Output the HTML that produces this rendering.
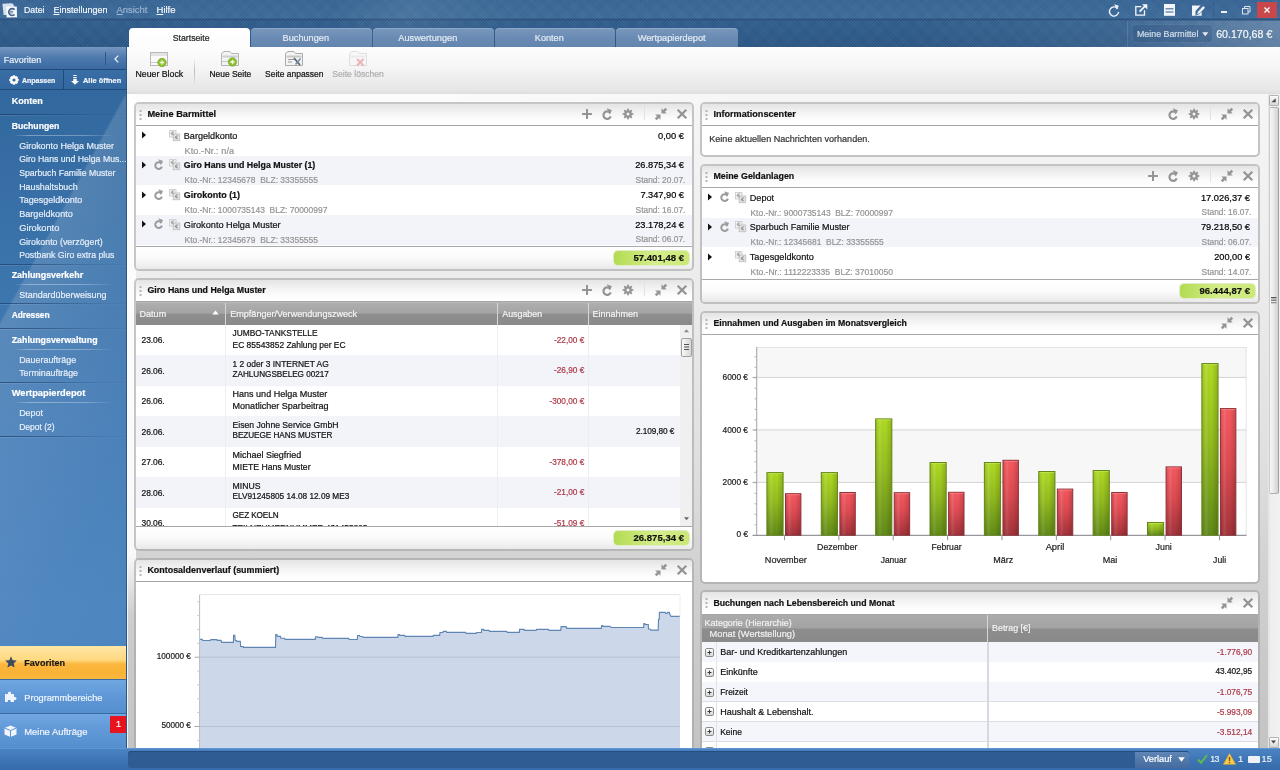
<!DOCTYPE html><html lang="de"><head><meta charset="utf-8"><title>Startseite</title><style>

html,body{margin:0;padding:0}
body{width:1280px;height:770px;overflow:hidden;position:relative;background:#ececec;font-family:"Liberation Sans", sans-serif;-webkit-font-smoothing:antialiased}
.t{position:absolute;white-space:nowrap;font-family:"Liberation Sans", sans-serif;-webkit-text-stroke:0.2px currentColor}
svg{overflow:visible}

</style></head><body><div id="app" style="position:absolute;left:0;top:0;width:1280px;height:770px;overflow:hidden;will-change:transform">
<div style="position:absolute;left:127px;top:94px;width:1153px;height:654px;background:linear-gradient(#f6f6f6 0,#f1f1f1 100px,#ebebeb 200px,#e0e0e0 360px,#d1d1d1 480px,#cacaca 560px,#c4c4c4 654px);overflow:hidden"><div style="position:absolute;left:0;top:0;width:9px;height:520px;background:linear-gradient(rgba(255,255,255,.85) 0,rgba(255,255,255,.85) 460px,rgba(255,255,255,0))"></div><div style="position:absolute;left:0;top:0;width:640px;height:200px;background:linear-gradient(163deg,rgba(255,255,255,.75) 0,rgba(255,255,255,.55) 25%,rgba(255,255,255,0) 50%)"></div><div style="position:absolute;left:0;top:0;width:1px;height:654px;background:rgba(255,255,255,.8)"></div></div>
<div style="position:absolute;left:0px;top:0px;width:1280px;height:47px;background:linear-gradient(#366596 0,#3b6a9a 18px,#28507d 19px,#28507d 20px,#2f5d8e 21px,#2b5888 40px,#2a5686 47px)"></div>
<div style="position:absolute;left:0px;top:0px;width:1280px;height:47px;background:repeating-linear-gradient(45deg,rgba(255,255,255,.03) 0 1px,rgba(0,0,0,.02) 1px 2px),repeating-linear-gradient(135deg,rgba(255,255,255,.025) 0 1px,rgba(0,0,0,.02) 1px 2px)"></div>
<div style="position:absolute;left:180px;top:0px;width:500px;height:47px;background:linear-gradient(115deg,rgba(255,255,255,0) 30%,rgba(255,255,255,.07) 45%,rgba(255,255,255,.02) 60%,rgba(255,255,255,0) 75%)"></div>
<div style="position:absolute;left:900px;top:20px;width:380px;height:27px;background:linear-gradient(90deg,rgba(255,255,255,0),rgba(255,255,255,.10))"></div>
<svg style="position:absolute;left:2px;top:2.5px" width="16" height="15" viewBox="0 0 16 15"><path d="M0.400 0.800L10.200 0.300 11.800 2v9.500L1.600 12z" fill="#d6e0ec"/><path d="M4.200 3.600L14.800 3.400 15 14.300 4.600 14.400z" fill="#f5f8fc"/><path d="M12.600 6.700a3.400 3.400 0 1 0 0 4.800" stroke="#47648a" stroke-width="1.700" fill="none"/><path d="M7.800 8.300h3.400M7.800 9.900h3.400" stroke="#5a7699" stroke-width=".9"/></svg>
<div class="t" style="top:4.0px;font-size:8.78px;line-height:12px;color:#f4f7fb;left:24px;text-decoration-thickness:1px;text-decoration-color:rgba(255,255,255,.4);">Datei</div>
<div class="t" style="top:4.0px;font-size:8.99px;line-height:12px;color:#f4f7fb;left:53.5px;text-decoration-thickness:1px;text-decoration-color:rgba(255,255,255,.4);"><u>E</u>instellungen</div>
<div class="t" style="top:4.0px;font-size:9.45px;line-height:12px;color:#9db4d1;left:116.5px;text-decoration-thickness:1px;text-decoration-color:rgba(255,255,255,.4);"><u>A</u>nsicht</div>
<div class="t" style="top:4.0px;font-size:9.5px;line-height:12px;color:#f4f7fb;left:156.5px;text-decoration-thickness:1px;text-decoration-color:rgba(255,255,255,.4);"><u>H</u>ilfe</div>
<svg style="position:absolute;left:1107.5px;top:3.5px" width="12" height="12.5" viewBox="0 0 12 12.5"><path d="M9.6 4.6A4.6 4.6 0 1 0 10.6 8" stroke="#f2f5fa" stroke-width="1.4" fill="none"/><path d="M6.2 0.2L10.8 1.8L8.8 5.6Z" fill="#f2f5fa"/></svg>
<svg style="position:absolute;left:1135px;top:4px" width="12.5" height="12" viewBox="0 0 12.5 12"><path d="M6.4 2.6H0.8v8.600h8.700V6.2" stroke="#f2f5fa" stroke-width="1.3" fill="none"/><path d="M4.6 7.6L10 2.200" stroke="#f2f5fa" stroke-width="1.9"/><path d="M7 0.2h5.300v5.300z" fill="#f2f5fa"/></svg>
<svg style="position:absolute;left:1164px;top:4px" width="11" height="12" viewBox="0 0 11 12"><rect x="0" y="0" width="11" height="11.8" fill="#f2f5fa"/><path d="M1.5 4.700h8M1.5 8h8" stroke="#6f8fb6" stroke-width="1.5"/></svg>
<svg style="position:absolute;left:1191.5px;top:4px" width="14" height="12" viewBox="0 0 14 12"><path d="M0 1.500h8.500l-5 5.500v4.800H0z" fill="#f2f5fa"/><path d="M3.500 11.800h6.200V6.500z" fill="#f2f5fa"/><path d="M4.700 10.800l.9-3 5.600-6 2.100 1.900-5.600 6z" fill="#f2f5fa" stroke="#3a6898" stroke-width=".7"/></svg>
<div style="position:absolute;left:1213px;top:2px;width:1px;height:16px;background:rgba(0,0,0,.10)"></div>
<div style="position:absolute;left:1221px;top:11px;width:6px;height:2px;background:#eef2f8"></div>
<svg style="position:absolute;left:1241.5px;top:6px" width="9" height="8.5" viewBox="0 0 9 8.5"><rect x="0.5" y="2.500" width="5.500" height="5.500" fill="none" stroke="#dbe4ef" stroke-width="1"/><path d="M2.500 2.500V0.500h5.500v5.500H6" fill="none" stroke="#dbe4ef" stroke-width="1"/></svg>
<div style="position:absolute;left:1257px;top:1.5px;width:20px;height:16.5px;background:#c8474a"></div>
<svg style="position:absolute;left:1264px;top:7px" width="6" height="6" viewBox="0 0 6 6"><path d="M0.500 0.500l5 5M5.500 0.500l-5 5" stroke="#fff" stroke-width="1.300" fill="none"/></svg>
<div style="position:absolute;left:1128px;top:20.5px;width:152px;height:26.5px;background:linear-gradient(90deg,rgba(255,255,255,.02),rgba(255,255,255,.09) 50%,rgba(255,255,255,.17))"></div>
<div style="position:absolute;left:1127px;top:21px;width:1px;height:26px;background:rgba(255,255,255,.12)"></div>
<div style="position:absolute;left:1133px;top:25px;width:79px;height:17px;background:rgba(30,65,110,.2);border-radius:3px;box-shadow:0 0 0 1px rgba(255,255,255,.03)"></div>
<div class="t" style="top:28.0px;font-size:8.85px;line-height:12px;color:#d3deeb;left:1137px;">Meine Barmittel</div>
<svg style="position:absolute;left:1201.5px;top:32px" width="6.5" height="4.5" viewBox="0 0 6.5 4.5"><path d="M0.200 0.300h6.100L3.250 4.200z" fill="#e6edf6"/></svg>
<div class="t" style="top:27.7px;font-size:10.64px;line-height:12px;color:#f4f7fb;right:7.70px;text-align:right;">60.170,68 €</div>
<div style="position:absolute;left:129px;top:28px;width:121px;height:20px;background:linear-gradient(#fff,#fcfcfc);border-radius:4px 4px 0 0"></div>
<div class="t" style="top:31.5px;font-size:8.71px;line-height:12px;color:#222;left:41.20px;width:300px;text-align:center;">Startseite</div>
<div style="position:absolute;left:251px;top:28px;width:121px;height:18.5px;background:linear-gradient(#7a98bc,#6b8cb4 45%,#6285ae);border-radius:4px 4px 0 0;box-shadow:inset 0 1px 0 rgba(255,255,255,.15)"></div>
<div class="t" style="top:31.5px;font-size:9.19px;line-height:12px;color:#e4ebf4;left:155.80px;width:300px;text-align:center;">Buchungen</div>
<div style="position:absolute;left:373px;top:28px;width:121px;height:18.5px;background:linear-gradient(#7a98bc,#6b8cb4 45%,#6285ae);border-radius:4px 4px 0 0;box-shadow:inset 0 1px 0 rgba(255,255,255,.15)"></div>
<div class="t" style="top:31.5px;font-size:9.23px;line-height:12px;color:#e4ebf4;left:277.80px;width:300px;text-align:center;">Auswertungen</div>
<div style="position:absolute;left:495px;top:28px;width:120px;height:18.5px;background:linear-gradient(#7a98bc,#6b8cb4 45%,#6285ae);border-radius:4px 4px 0 0;box-shadow:inset 0 1px 0 rgba(255,255,255,.15)"></div>
<div class="t" style="top:31.5px;font-size:9.15px;line-height:12px;color:#e4ebf4;left:399.30px;width:300px;text-align:center;">Konten</div>
<div style="position:absolute;left:616px;top:28px;width:122px;height:18.5px;background:linear-gradient(#7a98bc,#6b8cb4 45%,#6285ae);border-radius:4px 4px 0 0;box-shadow:inset 0 1px 0 rgba(255,255,255,.15)"></div>
<div class="t" style="top:31.5px;font-size:9.22px;line-height:12px;color:#e4ebf4;left:521.70px;width:300px;text-align:center;">Wertpapierdepot</div>
<div style="position:absolute;left:127px;top:47px;width:1153px;height:47px;background:linear-gradient(#fdfdfd,#f6f6f6 40%,#e6e6e6 92%,#dedede)"></div>
<div style="position:absolute;left:194px;top:58px;width:1px;height:28px;background:linear-gradient(rgba(200,200,200,0),#c2c2c2 40%,#c2c2c2 60%,rgba(200,200,200,0))"></div>
<svg style="position:absolute;left:150px;top:51px" width="20" height="17" viewBox="0 0 20 17"><rect x="0.5" y="1.5" width="17" height="13" fill="#fafafa" stroke="#b9b9b9"/><rect x="1" y="2" width="16" height="3" fill="#e3e3e3"/><path d="M1 11.5h16" stroke="#c9c9c9"/><circle cx="12" cy="11.5" r="4.2" fill="#8bbf2c" stroke="#6f9e1e" stroke-width=".6"/><path d="M9.7 11.5h4.6M12 9.2v4.6" stroke="#f2f9df" stroke-width="1.3"/></svg>
<svg style="position:absolute;left:221px;top:50px" width="20" height="18" viewBox="0 0 20 18"><path d="M0.5 3.5v12h17v-12h-7l-1.5-2h-6z" fill="#f3f3f3" stroke="#b5b5b5"/><path d="M1.5 6.5h15" stroke="#cfcfcf" stroke-width="2"/><path d="M1 11.5h9" stroke="#c9c9c9"/><circle cx="11.5" cy="12" r="4.2" fill="#8bbf2c" stroke="#6f9e1e" stroke-width=".6"/><path d="M9.2 12h4.6M11.5 9.7v4.6" stroke="#f2f9df" stroke-width="1.3"/></svg>
<svg style="position:absolute;left:285px;top:50px" width="20" height="18" viewBox="0 0 20 18"><path d="M0.5 3.5v12h17v-12h-7l-1.5-2h-6z" fill="#f3f3f3" stroke="#ababab"/><path d="M1.5 6.5h15" stroke="#c7c7c7" stroke-width="2"/><path d="M3 9.5h6M3 12h4" stroke="#9a9a9a"/><path d="M9 8l6 7" stroke="#55657a" stroke-width="1.8"/><path d="M15.5 8.5l-5 6" stroke="#7a8aa0" stroke-width="1.5"/></svg>
<svg style="position:absolute;left:349px;top:50px" width="20" height="18" viewBox="0 0 20 18"><g opacity=".5"><path d="M0.5 3.5v12h17v-12h-7l-1.5-2h-6z" fill="#f6f6f6" stroke="#c4c4c4"/><path d="M1.5 6.5h15" stroke="#dcdcdc" stroke-width="2"/><path d="M8 9l6.5 6.5M14.5 9L8 15.500" stroke="#e0707a" stroke-width="2"/></g></svg>
<div class="t" style="top:68.0px;font-size:8.78px;line-height:12px;color:#111;left:9.30px;width:300px;text-align:center;">Neuer Block</div>
<div class="t" style="top:68.0px;font-size:8.45px;line-height:12px;color:#111;left:80.30px;width:300px;text-align:center;">Neue Seite</div>
<div class="t" style="top:68.0px;font-size:8.47px;line-height:12px;color:#111;left:144.30px;width:300px;text-align:center;">Seite anpassen</div>
<div class="t" style="top:68.0px;font-size:8.59px;line-height:12px;color:#adadad;left:208.10px;width:300px;text-align:center;">Seite löschen</div>
<div style="position:absolute;left:0px;top:47px;width:126px;height:701px;background:linear-gradient(#30669c 0,#32699f 60px,#3a72aa 200px,#457db7 380px,#4b84bf 560px);overflow:hidden"><div style="position:absolute;left:0;top:43px;width:126px;height:658px;background:linear-gradient(118.8deg,rgba(255,255,255,0) 26%,rgba(255,255,255,.14) 26.6%,rgba(255,255,255,.09) 40%,rgba(255,255,255,.03) 65%,rgba(255,255,255,0) 100%)"></div></div>
<div style="position:absolute;left:126px;top:47px;width:1px;height:701px;background:#2a5689"></div>
<div style="position:absolute;left:0px;top:47px;width:126px;height:22px;background:linear-gradient(#7597c0,#4d79ad 50%,#3b6aa1)"></div>
<div class="t" style="top:53.5px;font-size:9.02px;line-height:12px;color:#e9eff7;left:3.8px;">Favoriten</div>
<div style="position:absolute;left:105px;top:52px;width:1px;height:13px;background:#2f5788"></div>
<svg style="position:absolute;left:114px;top:55px" width="5" height="8" viewBox="0 0 5 8"><path d="M4.2 0.6L1 4l3.200 3.400" stroke="#e8eef6" stroke-width="1.3" fill="none"/></svg>
<div style="position:absolute;left:0px;top:69px;width:126px;height:1px;background:#204a7a"></div>
<div style="position:absolute;left:0px;top:70px;width:126px;height:19px;background:linear-gradient(#386da6,#33679f)"></div>
<div style="position:absolute;left:63px;top:70px;width:1px;height:19px;background:#204a7a"></div>
<div style="position:absolute;left:0px;top:89px;width:126px;height:1px;background:#204a7a"></div>
<svg style="position:absolute;left:9px;top:74.5px" width="10" height="10" viewBox="0 0 10 10"><rect x="3.900" y="0.300" width="2.200" height="9.400" transform="rotate(0 5 5)" fill="#fff"/><rect x="3.900" y="0.300" width="2.200" height="9.400" transform="rotate(45 5 5)" fill="#fff"/><rect x="3.900" y="0.300" width="2.200" height="9.400" transform="rotate(90 5 5)" fill="#fff"/><rect x="3.900" y="0.300" width="2.200" height="9.400" transform="rotate(135 5 5)" fill="#fff"/><circle cx="5" cy="5" r="3.900" fill="#fff"/><circle cx="5" cy="5" r="1.600" fill="#34679d"/></svg>
<div class="t" style="top:74.5px;font-size:6.97px;line-height:12px;color:#eef3f9;font-weight:700;left:22px;">Anpassen</div>
<svg style="position:absolute;left:71px;top:74.5px" width="8" height="10" viewBox="0 0 8 10"><path d="M2.300 0.500h3.400M2.300 2.500h3.400" stroke="#fff" stroke-width="1"/><path d="M2.300 3.800h3.400v2.200h2.300L4 9.800 0 6h2.300z" fill="#fff"/></svg>
<div class="t" style="top:74.5px;font-size:7.41px;line-height:12px;color:#eef3f9;font-weight:700;left:83px;">Alle öffnen</div>
<div class="t" style="top:94.5px;font-size:9.0px;line-height:12px;color:#fff;font-weight:700;left:11.7px;">Konten</div>
<div style="position:absolute;left:0px;top:114px;width:126px;height:1px;background:linear-gradient(90deg,rgba(20,55,100,.65),rgba(20,55,100,.45) 40%,rgba(20,55,100,.12) 80%,rgba(20,55,100,.05))"></div><div style="position:absolute;left:0px;top:115px;width:126px;height:1px;background:linear-gradient(90deg,rgba(255,255,255,.10),rgba(255,255,255,.02) 70%)"></div>
<div class="t" style="top:119.7px;font-size:8.69px;line-height:12px;color:#fff;font-weight:700;left:11.7px;">Buchungen</div>
<div style="position:absolute;left:14px;top:135px;width:100px;height:1px;background:linear-gradient(90deg,rgba(255,255,255,.0),rgba(255,255,255,.35) 15%,rgba(255,255,255,.3) 70%,rgba(255,255,255,0))"></div>
<div class="t" style="top:139.6px;font-size:8.98px;line-height:12px;color:#e6eef8;left:19.2px;">Girokonto Helga Muster</div>
<div class="t" style="top:153.3px;font-size:8.71px;line-height:12px;color:#e6eef8;left:19.2px;">Giro Hans und Helga Mus...</div>
<div class="t" style="top:167.0px;font-size:8.66px;line-height:12px;color:#e6eef8;left:19.2px;">Sparbuch Familie Muster</div>
<div class="t" style="top:180.7px;font-size:8.83px;line-height:12px;color:#e6eef8;left:19.2px;">Haushaltsbuch</div>
<div class="t" style="top:194.4px;font-size:8.99px;line-height:12px;color:#e6eef8;left:19.2px;">Tagesgeldkonto</div>
<div class="t" style="top:208.1px;font-size:9.11px;line-height:12px;color:#e6eef8;left:19.2px;">Bargeldkonto</div>
<div class="t" style="top:221.8px;font-size:9.25px;line-height:12px;color:#e6eef8;left:19.2px;">Girokonto</div>
<div class="t" style="top:235.5px;font-size:8.85px;line-height:12px;color:#e6eef8;left:19.2px;">Girokonto (verzögert)</div>
<div class="t" style="top:249.2px;font-size:8.7px;line-height:12px;color:#e6eef8;left:19.2px;">Postbank Giro extra plus</div>
<div style="position:absolute;left:0px;top:264px;width:126px;height:1px;background:linear-gradient(90deg,rgba(20,55,100,.65),rgba(20,55,100,.45) 40%,rgba(20,55,100,.12) 80%,rgba(20,55,100,.05))"></div><div style="position:absolute;left:0px;top:265px;width:126px;height:1px;background:linear-gradient(90deg,rgba(255,255,255,.10),rgba(255,255,255,.02) 70%)"></div>
<div class="t" style="top:269.0px;font-size:8.87px;line-height:12px;color:#fff;font-weight:700;left:11.7px;">Zahlungsverkehr</div>
<div style="position:absolute;left:14px;top:284px;width:100px;height:1px;background:linear-gradient(90deg,rgba(255,255,255,.0),rgba(255,255,255,.35) 15%,rgba(255,255,255,.3) 70%,rgba(255,255,255,0))"></div>
<div class="t" style="top:289.0px;font-size:8.97px;line-height:12px;color:#e6eef8;left:19.2px;">Standardüberweisung</div>
<div style="position:absolute;left:0px;top:303px;width:126px;height:1px;background:linear-gradient(90deg,rgba(20,55,100,.65),rgba(20,55,100,.45) 40%,rgba(20,55,100,.12) 80%,rgba(20,55,100,.05))"></div><div style="position:absolute;left:0px;top:304px;width:126px;height:1px;background:linear-gradient(90deg,rgba(255,255,255,.10),rgba(255,255,255,.02) 70%)"></div>
<div class="t" style="top:308.8px;font-size:8.46px;line-height:12px;color:#fff;font-weight:700;letter-spacing:-0.095px;left:11.7px;">Adressen</div>
<div style="position:absolute;left:0px;top:328px;width:126px;height:1px;background:linear-gradient(90deg,rgba(20,55,100,.65),rgba(20,55,100,.45) 40%,rgba(20,55,100,.12) 80%,rgba(20,55,100,.05))"></div><div style="position:absolute;left:0px;top:329px;width:126px;height:1px;background:linear-gradient(90deg,rgba(255,255,255,.10),rgba(255,255,255,.02) 70%)"></div>
<div class="t" style="top:333.8px;font-size:8.84px;line-height:12px;color:#fff;font-weight:700;left:11.7px;">Zahlungsverwaltung</div>
<div style="position:absolute;left:14px;top:349px;width:100px;height:1px;background:linear-gradient(90deg,rgba(255,255,255,.0),rgba(255,255,255,.35) 15%,rgba(255,255,255,.3) 70%,rgba(255,255,255,0))"></div>
<div class="t" style="top:353.7px;font-size:8.92px;line-height:12px;color:#e6eef8;left:19.2px;">Daueraufträge</div>
<div class="t" style="top:367.4px;font-size:8.82px;line-height:12px;color:#e6eef8;left:19.2px;">Terminaufträge</div>
<div style="position:absolute;left:0px;top:382px;width:126px;height:1px;background:linear-gradient(90deg,rgba(20,55,100,.65),rgba(20,55,100,.45) 40%,rgba(20,55,100,.12) 80%,rgba(20,55,100,.05))"></div><div style="position:absolute;left:0px;top:383px;width:126px;height:1px;background:linear-gradient(90deg,rgba(255,255,255,.10),rgba(255,255,255,.02) 70%)"></div>
<div class="t" style="top:387.0px;font-size:9.31px;line-height:12px;color:#fff;font-weight:700;left:11.7px;">Wertpapierdepot</div>
<div style="position:absolute;left:14px;top:402px;width:100px;height:1px;background:linear-gradient(90deg,rgba(255,255,255,.0),rgba(255,255,255,.35) 15%,rgba(255,255,255,.3) 70%,rgba(255,255,255,0))"></div>
<div class="t" style="top:407.0px;font-size:8.92px;line-height:12px;color:#e6eef8;left:19.2px;">Depot</div>
<div class="t" style="top:421.0px;font-size:8.52px;line-height:12px;color:#e6eef8;left:19.2px;">Depot (2)</div>
<div style="position:absolute;left:0px;top:436px;width:126px;height:1px;background:linear-gradient(90deg,rgba(20,55,100,.65),rgba(20,55,100,.45) 40%,rgba(20,55,100,.12) 80%,rgba(20,55,100,.05))"></div><div style="position:absolute;left:0px;top:437px;width:126px;height:1px;background:linear-gradient(90deg,rgba(255,255,255,.10),rgba(255,255,255,.02) 70%)"></div>
<div style="position:absolute;left:0px;top:646px;width:126px;height:33px;background:linear-gradient(#ffe7a6,#fed980 42%,#fbb73e 55%,#f9b235 80%,#fab840)"></div>
<svg style="position:absolute;left:5px;top:656px" width="12" height="12" viewBox="0 0 12 12"><path d="M6 0.3l1.7 3.900 4.100.4-3.100 2.800.9 4.200L6 9.400 2.400 11.600l.9-4.200L.2 4.600l4.100-.4z" fill="#3c4d60"/></svg>
<div class="t" style="top:657.0px;font-size:9.06px;line-height:12px;color:#1a1a1a;font-weight:700;left:24.3px;">Favoriten</div>
<div style="position:absolute;left:0px;top:679px;width:126px;height:1px;background:#3a6aa0"></div>
<div style="position:absolute;left:0px;top:680px;width:126px;height:33px;background:linear-gradient(#70a7e2,#6199d8 45%,#568fce)"></div>
<svg style="position:absolute;left:4px;top:690px" width="13" height="13" viewBox="0 0 13 13"><path d="M1 5h3.200a1.600 1.600 0 1 1 2.600 0H10v3.200a1.600 1.600 0 1 1 0 2.600V13H6.500a1.500 1.500 0 1 0-2.600 0H1z" fill="#eef4fb" transform="translate(0,-1)"/></svg>
<div class="t" style="top:691.5px;font-size:9.2px;line-height:12px;color:#eef4fb;left:24.3px;">Programmbereiche</div>
<div style="position:absolute;left:0px;top:713px;width:126px;height:1px;background:#3a6aa0"></div>
<div style="position:absolute;left:0px;top:714px;width:126px;height:34px;background:linear-gradient(#70a7e2,#6199d8 45%,#568fce)"></div>
<svg style="position:absolute;left:4px;top:725px" width="13" height="12" viewBox="0 0 13 12"><path d="M6.500 0.500L12.500 3v6.500L6.500 12 0.500 9.500V3z" fill="#f2f6fb"/><path d="M0.500 3l6 2.500 6-2.500M6.500 5.500V12" stroke="#5b92cf" stroke-width="1" fill="none"/></svg>
<div class="t" style="top:725.5px;font-size:9.4px;line-height:12px;color:#eef4fb;left:24.3px;">Meine Aufträge</div>
<div style="position:absolute;left:110px;top:716px;width:16px;height:16.5px;background:#e8131d"></div>
<div class="t" style="top:718.0px;font-size:9px;line-height:12px;color:#fff;left:-31.50px;width:300px;text-align:center;">1</div>
<div style="position:absolute;left:1268px;top:94px;width:12px;height:654px;background:linear-gradient(90deg,#e3e3e3,#efefef 25%,#f1f1f1)"></div>
<div style="position:absolute;left:1268.5px;top:94.5px;width:10.5px;height:11.5px;background:linear-gradient(#fbfbfb,#e6e6e6 60%,#d6d6d6);border:1px solid #b3b3b3;box-sizing:border-box;border-radius:1px"></div>
<svg style="position:absolute;left:1271px;top:98px" width="5" height="4.5" viewBox="0 0 5 4.5"><path d="M0.300 4.200H4.700V0.300z" fill="#4a4a4a"/></svg>
<div style="position:absolute;left:1268.5px;top:107px;width:10.5px;height:387px;background:linear-gradient(90deg,#f6f6f6,#ededed 35%,#dcdcdc 75%,#d2d2d2);border:1px solid #b0b0b0;border-left-color:#cdcdcd;border-right-color:#a2a2a2;box-sizing:border-box;border-radius:2px"></div>
<svg style="position:absolute;left:1270.8px;top:297.3px" width="5.5" height="7" viewBox="0 0 5.5 7"><path d="M0 0.700h5.500" stroke="#4a4a4a" stroke-width="1.200"/><path d="M0 3.200h5.500" stroke="#6a6a6a" stroke-width="1.200"/><path d="M0 5.700h5.500" stroke="#8a8a8a" stroke-width="1.200"/></svg>
<div style="position:absolute;left:1268.5px;top:737px;width:10.5px;height:10.5px;background:linear-gradient(#fbfbfb,#e6e6e6 60%,#d6d6d6);border:1px solid #b3b3b3;box-sizing:border-box;border-radius:1px"></div>
<svg style="position:absolute;left:1271.3px;top:740.3px" width="5" height="4" viewBox="0 0 5 4"><path d="M0 0.500h5L2.500 3.500z" fill="#444"/></svg>
<div style="position:absolute;left:134px;top:102px;width:560px;height:169px;border:2px solid rgba(163,163,163,.6);border-radius:5px;background:#fff;background-clip:padding-box;box-sizing:border-box;overflow:hidden"><div style="position:absolute;left:0px;top:0px;width:556px;height:21px;background:linear-gradient(#e4e4e4,#f1f1f1 35%,#fcfcfc 70%,#fff);border-bottom:1px solid #a6a6a6"></div></div><svg style="position:absolute;left:139px;top:110px" width="3" height="10" viewBox="0 0 3 10"><rect x="0.5" y="0" width="2" height="2" fill="#b5b5b5"/><rect x="0.5" y="4" width="2" height="2" fill="#b5b5b5"/><rect x="0.5" y="8" width="2" height="2" fill="#b5b5b5"/></svg><div class="t" style="top:108.0px;font-size:9.24px;line-height:12px;color:#111;font-weight:700;left:147.4px;">Meine Barmittel</div><svg style="position:absolute;left:676.3px;top:108.3px" width="12" height="12" viewBox="0 0 12 12"><path d="M1.700 1.700l8.600 8.600M10.300 1.700l-8.600 8.600" stroke="#949494" stroke-width="2.300" fill="none"/></svg><svg style="position:absolute;left:654.8px;top:108.0px" width="12" height="12" viewBox="0 0 12 12"><path d="M6.500 0.300V5.500H11.700Z" fill="#949494"/><path d="M8.400 3.600L11.300 0.700" stroke="#949494" stroke-width="2.500"/><path d="M0.300 6.500H5.500V11.700Z" fill="#949494"/><path d="M3.600 8.400L0.700 11.300" stroke="#949494" stroke-width="2.500"/></svg><div style="position:absolute;left:644px;top:105px;width:1px;height:15px;background:#e2e2e2"></div><svg style="position:absolute;left:621.6px;top:108.0px" width="12" height="12" viewBox="0 0 12 12"><rect x="5.100" y="0.700" width="1.800" height="10.600" transform="rotate(0 6 6)" fill="#949494"/><rect x="5.100" y="0.700" width="1.800" height="10.600" transform="rotate(45 6 6)" fill="#949494"/><rect x="5.100" y="0.700" width="1.800" height="10.600" transform="rotate(90 6 6)" fill="#949494"/><rect x="5.100" y="0.700" width="1.800" height="10.600" transform="rotate(135 6 6)" fill="#949494"/><circle cx="6" cy="6" r="3.800" fill="#949494"/><circle cx="6" cy="6" r="1.500" fill="#f6f6f6"/></svg><svg style="position:absolute;left:601.0px;top:108.0px" width="12" height="12" viewBox="0 0 12 12"><path d="M9.300 5.200A3.700 3.700 0 1 0 9.700 8.300" stroke="#949494" stroke-width="2.200" fill="none"/><path d="M5.800 0.300L11 2.300L8.600 6.600Z" fill="#949494"/></svg><svg style="position:absolute;left:581px;top:108.0px" width="12" height="12" viewBox="0 0 12 12"><path d="M6 1.1v9.8M1.1 6h9.8" stroke="#949494" stroke-width="2" fill="none"/></svg><div style="position:absolute;left:136px;top:246px;width:556px;height:23px;background:linear-gradient(#fff,#fbfbfb 50%,#e9e9e9);border-top:1px solid #a8a8a8;border-radius:0 0 3px 3px;box-sizing:border-box"></div><div style="position:absolute;left:613.5px;top:251.2px;width:75px;height:13.8px;background:linear-gradient(90deg,#b3db52,#d6ee8d 55%,#cbe877);border-radius:4px;box-shadow:0 0 0 1px #e3ecca"></div><div class="t" style="top:252.3px;font-size:9.54px;line-height:12px;color:#111;font-weight:700;letter-spacing:0.018px;right:595.98px;text-align:right;">57.401,48 €</div>
<svg style="position:absolute;left:140.7px;top:131.2px" width="6" height="8" viewBox="0 0 6 8"><path d="M1 0.500L5 4L1 7.500Z" fill="#111"/></svg><svg style="position:absolute;left:169.3px;top:129.7px" width="11.2" height="11.2" viewBox="0 0 12 12"><rect x="0.500" y="0.500" width="7" height="7" fill="#f1f1f1" stroke="#cfcfcf"/><rect x="4.500" y="4.300" width="7" height="7.200" fill="#e6e6e6" stroke="#c2c2c2"/><path d="M5.600 2.300a1.700 1.700 0 1 0 0 2.600M2 3.200h2.500M2 4.200h2.500" stroke="#9a9a9a" stroke-width=".9" fill="none"/><path d="M9.800 6.500a1.700 1.700 0 1 0 0 2.800M6.300 7.500h2.500M6.300 8.500h2.500" stroke="#8a8a8a" stroke-width=".9" fill="none"/></svg><div class="t" style="top:129.6px;font-size:9.1px;line-height:12px;color:#111;left:183.8px;">Bargeldkonto</div><div class="t" style="top:144.6px;font-size:9.12px;line-height:12px;color:#949494;letter-spacing:0.082px;left:184.5px;white-space:pre;">Kto.-Nr.: n/a</div><div class="t" style="top:129.5px;font-size:9.32px;line-height:12px;color:#000;right:596.00px;text-align:right;">0,00 €</div><div style="position:absolute;left:136px;top:155.7px;width:556px;height:29.7px;background:#f2f4fa"></div><svg style="position:absolute;left:140.7px;top:160.89999999999998px" width="6" height="8" viewBox="0 0 6 8"><path d="M1 0.500L5 4L1 7.500Z" fill="#111"/></svg><svg style="position:absolute;left:153.2px;top:159.0px" width="11" height="11" viewBox="0 0 12 12"><path d="M9.300 5.200A3.700 3.700 0 1 0 9.700 8.300" stroke="#9c9c9c" stroke-width="2.200" fill="none"/><path d="M5.800 0.300L11 2.300L8.600 6.600Z" fill="#9c9c9c"/></svg><svg style="position:absolute;left:169.3px;top:159.39999999999998px" width="11.2" height="11.2" viewBox="0 0 12 12"><rect x="0.500" y="0.500" width="7" height="7" fill="#f1f1f1" stroke="#cfcfcf"/><rect x="4.500" y="4.300" width="7" height="7.200" fill="#e6e6e6" stroke="#c2c2c2"/><path d="M5.600 2.300a1.700 1.700 0 1 0 0 2.600M2 3.200h2.500M2 4.200h2.500" stroke="#9a9a9a" stroke-width=".9" fill="none"/><path d="M9.800 6.500a1.700 1.700 0 1 0 0 2.800M6.300 7.500h2.500M6.300 8.500h2.500" stroke="#8a8a8a" stroke-width=".9" fill="none"/></svg><div class="t" style="top:159.3px;font-size:8.81px;line-height:12px;color:#111;font-weight:700;left:183.8px;">Giro Hans und Helga Muster (1)</div><div class="t" style="top:174.3px;font-size:8.46px;line-height:12px;color:#949494;left:184.5px;white-space:pre;">Kto.-Nr.: 12345678  BLZ: 33355555</div><div class="t" style="top:159.2px;font-size:9.24px;line-height:12px;color:#000;right:596.00px;text-align:right;">26.875,34 €</div><div class="t" style="top:173.9px;font-size:8.4px;line-height:12px;color:#949494;right:594.60px;text-align:right;">Stand: 20.07.</div><svg style="position:absolute;left:140.7px;top:190.6px" width="6" height="8" viewBox="0 0 6 8"><path d="M1 0.500L5 4L1 7.500Z" fill="#111"/></svg><svg style="position:absolute;left:153.2px;top:188.70000000000002px" width="11" height="11" viewBox="0 0 12 12"><path d="M9.300 5.200A3.700 3.700 0 1 0 9.700 8.300" stroke="#9c9c9c" stroke-width="2.200" fill="none"/><path d="M5.800 0.300L11 2.300L8.600 6.600Z" fill="#9c9c9c"/></svg><svg style="position:absolute;left:169.3px;top:189.1px" width="11.2" height="11.2" viewBox="0 0 12 12"><rect x="0.500" y="0.500" width="7" height="7" fill="#f1f1f1" stroke="#cfcfcf"/><rect x="4.500" y="4.300" width="7" height="7.200" fill="#e6e6e6" stroke="#c2c2c2"/><path d="M5.600 2.300a1.700 1.700 0 1 0 0 2.600M2 3.200h2.500M2 4.200h2.500" stroke="#9a9a9a" stroke-width=".9" fill="none"/><path d="M9.800 6.500a1.700 1.700 0 1 0 0 2.800M6.300 7.500h2.500M6.300 8.500h2.500" stroke="#8a8a8a" stroke-width=".9" fill="none"/></svg><div class="t" style="top:189.0px;font-size:8.98px;line-height:12px;color:#111;font-weight:700;left:183.8px;">Girokonto (1)</div><div class="t" style="top:204.0px;font-size:8.46px;line-height:12px;color:#949494;left:184.5px;white-space:pre;">Kto.-Nr.: 1000735143  BLZ: 70000997</div><div class="t" style="top:188.9px;font-size:9.22px;line-height:12px;color:#000;right:596.00px;text-align:right;">7.347,90 €</div><div class="t" style="top:203.6px;font-size:8.4px;line-height:12px;color:#949494;right:594.60px;text-align:right;">Stand: 16.07.</div><div style="position:absolute;left:136px;top:215.1px;width:556px;height:29.7px;background:#f2f4fa"></div><svg style="position:absolute;left:140.7px;top:220.29999999999998px" width="6" height="8" viewBox="0 0 6 8"><path d="M1 0.500L5 4L1 7.500Z" fill="#111"/></svg><svg style="position:absolute;left:153.2px;top:218.4px" width="11" height="11" viewBox="0 0 12 12"><path d="M9.300 5.200A3.700 3.700 0 1 0 9.700 8.300" stroke="#9c9c9c" stroke-width="2.200" fill="none"/><path d="M5.800 0.300L11 2.300L8.600 6.600Z" fill="#9c9c9c"/></svg><svg style="position:absolute;left:169.3px;top:218.79999999999998px" width="11.2" height="11.2" viewBox="0 0 12 12"><rect x="0.500" y="0.500" width="7" height="7" fill="#f1f1f1" stroke="#cfcfcf"/><rect x="4.500" y="4.300" width="7" height="7.200" fill="#e6e6e6" stroke="#c2c2c2"/><path d="M5.600 2.300a1.700 1.700 0 1 0 0 2.600M2 3.200h2.500M2 4.200h2.500" stroke="#9a9a9a" stroke-width=".9" fill="none"/><path d="M9.800 6.500a1.700 1.700 0 1 0 0 2.800M6.300 7.500h2.500M6.300 8.500h2.500" stroke="#8a8a8a" stroke-width=".9" fill="none"/></svg><div class="t" style="top:218.7px;font-size:9.19px;line-height:12px;color:#111;left:183.8px;">Girokonto Helga Muster</div><div class="t" style="top:233.7px;font-size:8.46px;line-height:12px;color:#949494;left:184.5px;white-space:pre;">Kto.-Nr.: 12345679  BLZ: 33355555</div><div class="t" style="top:218.6px;font-size:9.26px;line-height:12px;color:#000;right:596.00px;text-align:right;">23.178,24 €</div><div class="t" style="top:233.3px;font-size:8.4px;line-height:12px;color:#949494;right:594.60px;text-align:right;">Stand: 06.07.</div>
<div style="position:absolute;left:134px;top:278px;width:560px;height:273px;border:2px solid rgba(163,163,163,.6);border-radius:5px;background:#fff;background-clip:padding-box;box-sizing:border-box;overflow:hidden"><div style="position:absolute;left:0px;top:0px;width:556px;height:21px;background:linear-gradient(#e4e4e4,#f1f1f1 35%,#fcfcfc 70%,#fff);border-bottom:1px solid #a6a6a6"></div></div><svg style="position:absolute;left:139px;top:286px" width="3" height="10" viewBox="0 0 3 10"><rect x="0.5" y="0" width="2" height="2" fill="#b5b5b5"/><rect x="0.5" y="4" width="2" height="2" fill="#b5b5b5"/><rect x="0.5" y="8" width="2" height="2" fill="#b5b5b5"/></svg><div class="t" style="top:284.0px;font-size:8.81px;line-height:12px;color:#111;font-weight:700;left:147.4px;">Giro Hans und Helga Muster</div><svg style="position:absolute;left:676.3px;top:284.3px" width="12" height="12" viewBox="0 0 12 12"><path d="M1.700 1.700l8.600 8.600M10.300 1.700l-8.600 8.600" stroke="#949494" stroke-width="2.300" fill="none"/></svg><svg style="position:absolute;left:654.8px;top:284.0px" width="12" height="12" viewBox="0 0 12 12"><path d="M6.500 0.300V5.500H11.700Z" fill="#949494"/><path d="M8.400 3.600L11.300 0.700" stroke="#949494" stroke-width="2.500"/><path d="M0.300 6.500H5.500V11.700Z" fill="#949494"/><path d="M3.600 8.400L0.700 11.300" stroke="#949494" stroke-width="2.500"/></svg><div style="position:absolute;left:644px;top:281px;width:1px;height:15px;background:#e2e2e2"></div><svg style="position:absolute;left:621.6px;top:284.0px" width="12" height="12" viewBox="0 0 12 12"><rect x="5.100" y="0.700" width="1.800" height="10.600" transform="rotate(0 6 6)" fill="#949494"/><rect x="5.100" y="0.700" width="1.800" height="10.600" transform="rotate(45 6 6)" fill="#949494"/><rect x="5.100" y="0.700" width="1.800" height="10.600" transform="rotate(90 6 6)" fill="#949494"/><rect x="5.100" y="0.700" width="1.800" height="10.600" transform="rotate(135 6 6)" fill="#949494"/><circle cx="6" cy="6" r="3.800" fill="#949494"/><circle cx="6" cy="6" r="1.500" fill="#f6f6f6"/></svg><svg style="position:absolute;left:601.0px;top:284.0px" width="12" height="12" viewBox="0 0 12 12"><path d="M9.300 5.200A3.700 3.700 0 1 0 9.700 8.300" stroke="#949494" stroke-width="2.200" fill="none"/><path d="M5.800 0.300L11 2.300L8.600 6.600Z" fill="#949494"/></svg><svg style="position:absolute;left:581px;top:284.0px" width="12" height="12" viewBox="0 0 12 12"><path d="M6 1.1v9.8M1.1 6h9.8" stroke="#949494" stroke-width="2" fill="none"/></svg><div style="position:absolute;left:136px;top:526px;width:556px;height:23px;background:linear-gradient(#fff,#fbfbfb 50%,#e9e9e9);border-top:1px solid #a8a8a8;border-radius:0 0 3px 3px;box-sizing:border-box"></div><div style="position:absolute;left:613.5px;top:531.2px;width:75px;height:13.8px;background:linear-gradient(90deg,#b3db52,#d6ee8d 55%,#cbe877);border-radius:4px;box-shadow:0 0 0 1px #e3ecca"></div><div class="t" style="top:532.3px;font-size:9.54px;line-height:12px;color:#111;font-weight:700;letter-spacing:0.018px;right:595.98px;text-align:right;">26.875,34 €</div>
<div style="position:absolute;left:136px;top:302px;width:556px;height:23px;background:linear-gradient(#b9b9b9 0,#adadad 2px,#a4a4a4 48%,#8e8e8e 54%,#8a8a8a)"></div>
<div style="position:absolute;left:225px;top:302.5px;width:1px;height:22.5px;background:#d6d6d6"></div>
<div style="position:absolute;left:496.5px;top:302.5px;width:1px;height:22.5px;background:#d6d6d6"></div>
<div style="position:absolute;left:588px;top:302.5px;width:1px;height:22.5px;background:#d6d6d6"></div>
<div class="t" style="top:308.0px;font-size:9.03px;line-height:12px;color:#f4f4f4;left:139.6px;">Datum</div>
<div class="t" style="top:308.0px;font-size:9.07px;line-height:12px;color:#f4f4f4;left:230.2px;">Empfänger/Verwendungszweck</div>
<div class="t" style="top:308.0px;font-size:8.86px;line-height:12px;color:#f4f4f4;left:502.3px;">Ausgaben</div>
<div class="t" style="top:308.0px;font-size:8.99px;line-height:12px;color:#f4f4f4;left:592.5px;">Einnahmen</div>
<svg style="position:absolute;left:212px;top:310.3px" width="7" height="5" viewBox="0 0 7 5"><path d="M0.300 4.600h6.400L3.500 0.400z" fill="#fff"/></svg>
<div style="position:absolute;left:0;top:0;width:1280px;height:526px;overflow:hidden"><div style="position:absolute;left:136px;top:355.0px;width:545px;height:30.5px;background:#f2f4fa"></div><div style="position:absolute;left:136px;top:416.0px;width:545px;height:30.5px;background:#f2f4fa"></div><div style="position:absolute;left:136px;top:477.0px;width:545px;height:30.5px;background:#f2f4fa"></div><div style="position:absolute;left:225px;top:325px;width:1px;height:201px;background:#eceef2"></div><div style="position:absolute;left:496.5px;top:325px;width:1px;height:201px;background:#eceef2"></div><div style="position:absolute;left:588px;top:325px;width:1px;height:201px;background:#eceef2"></div><div class="t" style="top:334.0px;font-size:8.46px;line-height:12px;color:#111;letter-spacing:-0.087px;left:141.6px;">23.06.</div><div class="t" style="top:327.1px;font-size:8.39px;line-height:12px;color:#111;left:232.5px;">JUMBO-TANKSTELLE</div><div class="t" style="top:338.9px;font-size:8.45px;line-height:12px;color:#111;left:232.5px;">EC 85543852 Zahlung per EC</div><div class="t" style="top:334.5px;font-size:8.28px;line-height:12px;color:#ad3a46;right:695.70px;text-align:right;">-22,00 €</div><div class="t" style="top:364.5px;font-size:8.46px;line-height:12px;color:#111;letter-spacing:-0.087px;left:141.6px;">26.06.</div><div class="t" style="top:357.6px;font-size:8.44px;line-height:12px;color:#111;left:232.5px;">1 2 oder 3 INTERNET AG</div><div class="t" style="top:369.4px;font-size:8.19px;line-height:12px;color:#111;letter-spacing:-0.024px;left:232.5px;">ZAHLUNGSBELEG 00217</div><div class="t" style="top:365.0px;font-size:8.28px;line-height:12px;color:#ad3a46;right:695.70px;text-align:right;">-26,90 €</div><div class="t" style="top:395.0px;font-size:8.46px;line-height:12px;color:#111;letter-spacing:-0.087px;left:141.6px;">26.06.</div><div class="t" style="top:388.1px;font-size:9.04px;line-height:12px;color:#111;left:232.5px;">Hans und Helga Muster</div><div class="t" style="top:399.9px;font-size:9.05px;line-height:12px;color:#111;left:232.5px;">Monatlicher Sparbeitrag</div><div class="t" style="top:395.5px;font-size:8.27px;line-height:12px;color:#ad3a46;letter-spacing:-0.006px;right:695.71px;text-align:right;">-300,00 €</div><div class="t" style="top:425.5px;font-size:8.46px;line-height:12px;color:#111;letter-spacing:-0.087px;left:141.6px;">26.06.</div><div class="t" style="top:418.6px;font-size:8.63px;line-height:12px;color:#111;left:232.5px;">Eisen Johne Service GmbH</div><div class="t" style="top:430.4px;font-size:8.19px;line-height:12px;color:#111;letter-spacing:-0.054px;left:232.5px;">BEZUEGE HANS MUSTER</div><div class="t" style="top:426.0px;font-size:8.27px;line-height:12px;color:#111;letter-spacing:-0.08px;right:605.68px;text-align:right;">2.109,80 €</div><div class="t" style="top:456.0px;font-size:8.46px;line-height:12px;color:#111;letter-spacing:-0.087px;left:141.6px;">27.06.</div><div class="t" style="top:449.1px;font-size:8.98px;line-height:12px;color:#111;left:232.5px;">Michael Siegfried</div><div class="t" style="top:460.9px;font-size:8.69px;line-height:12px;color:#111;left:232.5px;">MIETE Hans Muster</div><div class="t" style="top:456.5px;font-size:8.27px;line-height:12px;color:#ad3a46;letter-spacing:-0.006px;right:695.71px;text-align:right;">-378,00 €</div><div class="t" style="top:486.5px;font-size:8.46px;line-height:12px;color:#111;letter-spacing:-0.087px;left:141.6px;">28.06.</div><div class="t" style="top:479.6px;font-size:8.69px;line-height:12px;color:#111;left:232.5px;">MINUS</div><div class="t" style="top:491.4px;font-size:8.26px;line-height:12px;color:#111;left:232.5px;">ELV91245805 14.08 12.09 ME3</div><div class="t" style="top:487.0px;font-size:8.28px;line-height:12px;color:#ad3a46;right:695.70px;text-align:right;">-21,00 €</div><div class="t" style="top:517.0px;font-size:8.46px;line-height:12px;color:#111;letter-spacing:-0.087px;left:141.6px;">30.06.</div><div class="t" style="top:510.1px;font-size:8.19px;line-height:12px;color:#111;letter-spacing:-0.086px;left:232.5px;">GEZ KOELN</div><div class="t" style="top:521.9px;font-size:8.32px;line-height:12px;color:#111;left:232.5px;">TEILNEHMERNUMMER 431455895</div><div class="t" style="top:517.5px;font-size:8.28px;line-height:12px;color:#ad3a46;right:695.70px;text-align:right;">-51,09 €</div></div>
<div style="position:absolute;left:679.5px;top:325px;width:12.5px;height:201px;background:#f0f0f0"></div>
<svg style="position:absolute;left:683.5px;top:328.5px" width="5" height="3.5" viewBox="0 0 5 3.5"><path d="M0 3.300h5L2.500 0.300z" fill="#8a8a8a"/></svg>
<div style="position:absolute;left:680.5px;top:337.5px;width:11px;height:19px;background:linear-gradient(90deg,#fafafa,#e3e3e3 60%,#d8d8d8);border:1px solid #9f9f9f;box-sizing:border-box;border-radius:2px"></div>
<svg style="position:absolute;left:683.5px;top:343.5px" width="5" height="7" viewBox="0 0 5 7"><path d="M0 0.500h5M0 3h5M0 5.500h5" stroke="#555" stroke-width="1"/></svg>
<svg style="position:absolute;left:683.5px;top:516.5px" width="5" height="3.5" viewBox="0 0 5 3.5"><path d="M0 0.300h5L2.500 3.300z" fill="#666"/></svg>
<div style="position:absolute;left:134px;top:558px;width:560px;height:220px;border:2px solid rgba(163,163,163,.6);border-radius:5px;background:#fff;background-clip:padding-box;box-sizing:border-box;overflow:hidden"><div style="position:absolute;left:0px;top:0px;width:556px;height:21px;background:linear-gradient(#e4e4e4,#f1f1f1 35%,#fcfcfc 70%,#fff);border-bottom:1px solid #a6a6a6"></div></div><svg style="position:absolute;left:139px;top:566px" width="3" height="10" viewBox="0 0 3 10"><rect x="0.5" y="0" width="2" height="2" fill="#b5b5b5"/><rect x="0.5" y="4" width="2" height="2" fill="#b5b5b5"/><rect x="0.5" y="8" width="2" height="2" fill="#b5b5b5"/></svg><div class="t" style="top:564.0px;font-size:8.94px;line-height:12px;color:#111;font-weight:700;left:147.4px;">Kontosaldenverlauf (summiert)</div><svg style="position:absolute;left:676.3px;top:564.3px" width="12" height="12" viewBox="0 0 12 12"><path d="M1.700 1.700l8.600 8.600M10.300 1.700l-8.600 8.600" stroke="#949494" stroke-width="2.300" fill="none"/></svg><svg style="position:absolute;left:654.8px;top:564.0px" width="12" height="12" viewBox="0 0 12 12"><path d="M6.500 0.300V5.500H11.700Z" fill="#949494"/><path d="M8.400 3.600L11.300 0.700" stroke="#949494" stroke-width="2.500"/><path d="M0.300 6.500H5.500V11.700Z" fill="#949494"/><path d="M3.600 8.400L0.700 11.300" stroke="#949494" stroke-width="2.500"/></svg>
<div style="position:absolute;left:136px;top:582px;width:556px;height:166px;background:#fff;overflow:hidden"><svg style="position:absolute;left:63px;top:12px" width="481" height="160" viewBox="0 0 481 160"><rect x="0.600" y="0.600" width="480.400" height="160" fill="#fff"/><polygon points="0.600,160 0.6,45.3 3.2,45.3 3.7,46.5 11.4,46.5 11.8,45.6 17.9,45.6 18.2,46.4 22.0,46.4 22.7,48.4 34.4,48.4 34.6,41.2 35.8,41.2 36.2,46.3 37.6,46.6 37.8,47.3 41.3,47.3 41.6,52.4 44.2,52.6 44.4,53.4 76.5,53.4 76.8,40.5 77.9,40.5 78.3,42.4 81.4,42.4 81.9,44.2 85.5,44.2 86.0,45.4 116.3,45.4 116.6,42.7 118.5,42.7 119.0,43.4 123.2,43.4 123.7,44.4 149.6,44.4 150.1,45.5 158.3,45.5 158.6,41.5 160.5,41.5 161.0,42.5 163.3,42.5 164.3,43.3 198.8,43.3 199.1,40.5 200.4,40.5 200.8,41.4 205.5,41.4 206.0,42.3 233.9,42.3 234.4,41.3 240.7,41.3 241.0,38.5 244.0,38.5 244.3,37.4 247.3,37.4 247.8,38.4 266.5,38.4 267.0,39.4 277.2,39.4 277.7,38.5 282.4,38.5 282.7,35.4 284.6,35.4 285.0,36.3 290.0,36.3 290.5,37.3 307.7,37.3 308.2,38.4 320.3,38.4 320.6,35.3 325.0,35.3 325.5,36.3 337.1,36.3 337.6,35.3 349.3,35.3 349.8,36.3 361.8,36.3 362.1,32.6 367.2,32.6 367.7,34.4 402.4,34.4 402.7,31.5 403.7,31.5 404.0,32.4 410.8,32.4 412.4,33.5 444.6,33.5 444.9,29.5 445.9,29.5 446.2,30.5 449.2,30.5 449.6,35.1 451.5,35.3 452.0,36.1 459.2,36.1 459.5,25.5 460.2,25.5 460.4,18.3 466.2,18.3 466.7,19.4 468.2,19.4 468.7,18.3 470.3,18.3 470.8,20.4 471.5,21.6 472.0,22.4 481.0,22.4 481,160" fill="#ccd8ea"/><path d="M0.600 63.200h480.400M0.600 132.500h480.400" stroke="#b5c2d6" stroke-width="1"/><polyline points="0.6,45.3 3.2,45.3 3.7,46.5 11.4,46.5 11.8,45.6 17.9,45.6 18.2,46.4 22.0,46.4 22.7,48.4 34.4,48.4 34.6,41.2 35.8,41.2 36.2,46.3 37.6,46.6 37.8,47.3 41.3,47.3 41.6,52.4 44.2,52.6 44.4,53.4 76.5,53.4 76.8,40.5 77.9,40.5 78.3,42.4 81.4,42.4 81.9,44.2 85.5,44.2 86.0,45.4 116.3,45.4 116.6,42.7 118.5,42.7 119.0,43.4 123.2,43.4 123.7,44.4 149.6,44.4 150.1,45.5 158.3,45.5 158.6,41.5 160.5,41.5 161.0,42.5 163.3,42.5 164.3,43.3 198.8,43.3 199.1,40.5 200.4,40.5 200.8,41.4 205.5,41.4 206.0,42.3 233.9,42.3 234.4,41.3 240.7,41.3 241.0,38.5 244.0,38.5 244.3,37.4 247.3,37.4 247.8,38.4 266.5,38.4 267.0,39.4 277.2,39.4 277.7,38.5 282.4,38.5 282.7,35.4 284.6,35.4 285.0,36.3 290.0,36.3 290.5,37.3 307.7,37.3 308.2,38.4 320.3,38.4 320.6,35.3 325.0,35.3 325.5,36.3 337.1,36.3 337.6,35.3 349.3,35.3 349.8,36.3 361.8,36.3 362.1,32.6 367.2,32.6 367.7,34.4 402.4,34.4 402.7,31.5 403.7,31.5 404.0,32.4 410.8,32.4 412.4,33.5 444.6,33.5 444.9,29.5 445.9,29.5 446.2,30.5 449.2,30.5 449.6,35.1 451.5,35.3 452.0,36.1 459.2,36.1 459.5,25.5 460.2,25.5 460.4,18.3 466.2,18.3 466.7,19.4 468.2,19.4 468.7,18.3 470.3,18.3 470.8,20.4 471.5,21.6 472.0,22.4 481.0,22.4" fill="none" stroke="#5f85b3" stroke-width="1.150" stroke-linejoin="miter"/><path d="M0.600 0.600v160" stroke="#b9bcc2" stroke-width="1"/><path d="M0.600 0.600h480.400" stroke="#e4e4e4"/><path d="M481 0.600v22" stroke="#ededed"/><path d="M-1.800 160.2h2.400" stroke="#c9c9c9" stroke-width="1"/><path d="M-1.800 146.4h2.400" stroke="#c9c9c9" stroke-width="1"/><path d="M-1.800 132.5h2.400" stroke="#c9c9c9" stroke-width="1"/><path d="M-1.800 118.6h2.400" stroke="#c9c9c9" stroke-width="1"/><path d="M-1.800 104.8h2.400" stroke="#c9c9c9" stroke-width="1"/><path d="M-1.800 90.9h2.400" stroke="#c9c9c9" stroke-width="1"/><path d="M-1.800 77.1h2.400" stroke="#c9c9c9" stroke-width="1"/><path d="M-1.800 49.3h2.400" stroke="#c9c9c9" stroke-width="1"/><path d="M-1.800 35.5h2.400" stroke="#c9c9c9" stroke-width="1"/><path d="M-1.800 21.6h2.400" stroke="#c9c9c9" stroke-width="1"/><path d="M-1.800 7.8h2.400" stroke="#c9c9c9" stroke-width="1"/><path d="M-4.500 63.200h5M-4.500 132.500h5" stroke="#a9a9a9" stroke-width="1"/></svg></div>
<div class="t" style="top:651.0px;font-size:8.18px;line-height:12px;color:#222;letter-spacing:-0.014px;right:1089.21px;text-align:right;">100000 €</div>
<div class="t" style="top:720.3px;font-size:8.18px;line-height:12px;color:#222;letter-spacing:-0.037px;right:1089.24px;text-align:right;">50000 €</div>
<div style="position:absolute;left:700px;top:102px;width:560px;height:55px;border:2px solid rgba(163,163,163,.6);border-radius:5px;background:#fff;background-clip:padding-box;box-sizing:border-box;overflow:hidden"><div style="position:absolute;left:0px;top:0px;width:556px;height:21px;background:linear-gradient(#e4e4e4,#f1f1f1 35%,#fcfcfc 70%,#fff);border-bottom:1px solid #a6a6a6"></div></div><svg style="position:absolute;left:705px;top:110px" width="3" height="10" viewBox="0 0 3 10"><rect x="0.5" y="0" width="2" height="2" fill="#b5b5b5"/><rect x="0.5" y="4" width="2" height="2" fill="#b5b5b5"/><rect x="0.5" y="8" width="2" height="2" fill="#b5b5b5"/></svg><div class="t" style="top:108.0px;font-size:9.11px;line-height:12px;color:#111;font-weight:700;left:713.4px;">Informationscenter</div><svg style="position:absolute;left:1242.3px;top:108.3px" width="12" height="12" viewBox="0 0 12 12"><path d="M1.700 1.700l8.600 8.600M10.300 1.700l-8.600 8.600" stroke="#949494" stroke-width="2.300" fill="none"/></svg><svg style="position:absolute;left:1220.8px;top:108.0px" width="12" height="12" viewBox="0 0 12 12"><path d="M6.500 0.300V5.500H11.700Z" fill="#949494"/><path d="M8.400 3.600L11.300 0.700" stroke="#949494" stroke-width="2.500"/><path d="M0.300 6.500H5.500V11.700Z" fill="#949494"/><path d="M3.600 8.400L0.700 11.300" stroke="#949494" stroke-width="2.500"/></svg><div style="position:absolute;left:1210px;top:105px;width:1px;height:15px;background:#e2e2e2"></div><svg style="position:absolute;left:1187.6px;top:108.0px" width="12" height="12" viewBox="0 0 12 12"><rect x="5.100" y="0.700" width="1.800" height="10.600" transform="rotate(0 6 6)" fill="#949494"/><rect x="5.100" y="0.700" width="1.800" height="10.600" transform="rotate(45 6 6)" fill="#949494"/><rect x="5.100" y="0.700" width="1.800" height="10.600" transform="rotate(90 6 6)" fill="#949494"/><rect x="5.100" y="0.700" width="1.800" height="10.600" transform="rotate(135 6 6)" fill="#949494"/><circle cx="6" cy="6" r="3.800" fill="#949494"/><circle cx="6" cy="6" r="1.500" fill="#f6f6f6"/></svg><svg style="position:absolute;left:1167.0px;top:108.0px" width="12" height="12" viewBox="0 0 12 12"><path d="M9.300 5.200A3.700 3.700 0 1 0 9.700 8.300" stroke="#949494" stroke-width="2.200" fill="none"/><path d="M5.800 0.300L11 2.300L8.600 6.600Z" fill="#949494"/></svg>
<div class="t" style="top:133.3px;font-size:9.05px;line-height:12px;color:#333;left:709.3px;">Keine aktuellen Nachrichten vorhanden.</div>
<div style="position:absolute;left:700px;top:164px;width:560px;height:140px;border:2px solid rgba(163,163,163,.6);border-radius:5px;background:#fff;background-clip:padding-box;box-sizing:border-box;overflow:hidden"><div style="position:absolute;left:0px;top:0px;width:556px;height:21px;background:linear-gradient(#e4e4e4,#f1f1f1 35%,#fcfcfc 70%,#fff);border-bottom:1px solid #a6a6a6"></div></div><svg style="position:absolute;left:705px;top:172px" width="3" height="10" viewBox="0 0 3 10"><rect x="0.5" y="0" width="2" height="2" fill="#b5b5b5"/><rect x="0.5" y="4" width="2" height="2" fill="#b5b5b5"/><rect x="0.5" y="8" width="2" height="2" fill="#b5b5b5"/></svg><div class="t" style="top:170.0px;font-size:8.89px;line-height:12px;color:#111;font-weight:700;left:713.4px;">Meine Geldanlagen</div><svg style="position:absolute;left:1242.3px;top:170.3px" width="12" height="12" viewBox="0 0 12 12"><path d="M1.700 1.700l8.600 8.600M10.300 1.700l-8.600 8.600" stroke="#949494" stroke-width="2.300" fill="none"/></svg><svg style="position:absolute;left:1220.8px;top:170.0px" width="12" height="12" viewBox="0 0 12 12"><path d="M6.500 0.300V5.500H11.700Z" fill="#949494"/><path d="M8.400 3.600L11.300 0.700" stroke="#949494" stroke-width="2.500"/><path d="M0.300 6.500H5.500V11.700Z" fill="#949494"/><path d="M3.600 8.400L0.700 11.300" stroke="#949494" stroke-width="2.500"/></svg><div style="position:absolute;left:1210px;top:167px;width:1px;height:15px;background:#e2e2e2"></div><svg style="position:absolute;left:1187.6px;top:170.0px" width="12" height="12" viewBox="0 0 12 12"><rect x="5.100" y="0.700" width="1.800" height="10.600" transform="rotate(0 6 6)" fill="#949494"/><rect x="5.100" y="0.700" width="1.800" height="10.600" transform="rotate(45 6 6)" fill="#949494"/><rect x="5.100" y="0.700" width="1.800" height="10.600" transform="rotate(90 6 6)" fill="#949494"/><rect x="5.100" y="0.700" width="1.800" height="10.600" transform="rotate(135 6 6)" fill="#949494"/><circle cx="6" cy="6" r="3.800" fill="#949494"/><circle cx="6" cy="6" r="1.500" fill="#f6f6f6"/></svg><svg style="position:absolute;left:1167.0px;top:170.0px" width="12" height="12" viewBox="0 0 12 12"><path d="M9.300 5.200A3.700 3.700 0 1 0 9.700 8.300" stroke="#949494" stroke-width="2.200" fill="none"/><path d="M5.800 0.300L11 2.300L8.600 6.600Z" fill="#949494"/></svg><svg style="position:absolute;left:1147px;top:170.0px" width="12" height="12" viewBox="0 0 12 12"><path d="M6 1.1v9.8M1.1 6h9.8" stroke="#949494" stroke-width="2" fill="none"/></svg><div style="position:absolute;left:702px;top:279px;width:556px;height:23px;background:linear-gradient(#fff,#fbfbfb 50%,#e9e9e9);border-top:1px solid #a8a8a8;border-radius:0 0 3px 3px;box-sizing:border-box"></div><div style="position:absolute;left:1179.5px;top:284.2px;width:75px;height:13.8px;background:linear-gradient(90deg,#b3db52,#d6ee8d 55%,#cbe877);border-radius:4px;box-shadow:0 0 0 1px #e3ecca"></div><div class="t" style="top:285.3px;font-size:9.54px;line-height:12px;color:#111;font-weight:700;letter-spacing:0.018px;right:29.98px;text-align:right;">96.444,87 €</div>
<svg style="position:absolute;left:706.7px;top:193.2px" width="6" height="8" viewBox="0 0 6 8"><path d="M1 0.500L5 4L1 7.500Z" fill="#111"/></svg><svg style="position:absolute;left:719.2px;top:191.3px" width="11" height="11" viewBox="0 0 12 12"><path d="M9.300 5.200A3.700 3.700 0 1 0 9.700 8.300" stroke="#9c9c9c" stroke-width="2.200" fill="none"/><path d="M5.800 0.300L11 2.300L8.600 6.600Z" fill="#9c9c9c"/></svg><svg style="position:absolute;left:735.3px;top:191.7px" width="11.2" height="11.2" viewBox="0 0 12 12"><rect x="0.500" y="0.500" width="7" height="7" fill="#f1f1f1" stroke="#cfcfcf"/><rect x="4.500" y="4.300" width="7" height="7.200" fill="#e6e6e6" stroke="#c2c2c2"/><path d="M5.600 2.300a1.700 1.700 0 1 0 0 2.600M2 3.200h2.500M2 4.200h2.500" stroke="#9a9a9a" stroke-width=".9" fill="none"/><path d="M9.800 6.500a1.700 1.700 0 1 0 0 2.800M6.300 7.500h2.500M6.300 8.500h2.500" stroke="#8a8a8a" stroke-width=".9" fill="none"/></svg><div class="t" style="top:191.6px;font-size:9.11px;line-height:12px;color:#111;left:749.8px;">Depot</div><div class="t" style="top:206.6px;font-size:8.43px;line-height:12px;color:#949494;left:750.5px;white-space:pre;">Kto.-Nr.: 9000735143  BLZ: 70000997</div><div class="t" style="top:191.5px;font-size:9.31px;line-height:12px;color:#000;right:30.00px;text-align:right;">17.026,37 €</div><div class="t" style="top:206.2px;font-size:8.4px;line-height:12px;color:#949494;right:28.60px;text-align:right;">Stand: 16.07.</div><div style="position:absolute;left:702px;top:217.7px;width:556px;height:29.7px;background:#f2f4fa"></div><svg style="position:absolute;left:706.7px;top:222.89999999999998px" width="6" height="8" viewBox="0 0 6 8"><path d="M1 0.500L5 4L1 7.500Z" fill="#111"/></svg><svg style="position:absolute;left:719.2px;top:221.0px" width="11" height="11" viewBox="0 0 12 12"><path d="M9.300 5.200A3.700 3.700 0 1 0 9.700 8.300" stroke="#9c9c9c" stroke-width="2.200" fill="none"/><path d="M5.800 0.300L11 2.300L8.600 6.600Z" fill="#9c9c9c"/></svg><svg style="position:absolute;left:735.3px;top:221.39999999999998px" width="11.2" height="11.2" viewBox="0 0 12 12"><rect x="0.500" y="0.500" width="7" height="7" fill="#f1f1f1" stroke="#cfcfcf"/><rect x="4.500" y="4.300" width="7" height="7.200" fill="#e6e6e6" stroke="#c2c2c2"/><path d="M5.600 2.300a1.700 1.700 0 1 0 0 2.600M2 3.200h2.500M2 4.200h2.500" stroke="#9a9a9a" stroke-width=".9" fill="none"/><path d="M9.800 6.500a1.700 1.700 0 1 0 0 2.800M6.300 7.500h2.500M6.300 8.500h2.500" stroke="#8a8a8a" stroke-width=".9" fill="none"/></svg><div class="t" style="top:221.3px;font-size:8.97px;line-height:12px;color:#111;left:749.8px;">Sparbuch Familie Muster</div><div class="t" style="top:236.3px;font-size:8.45px;line-height:12px;color:#949494;left:750.5px;white-space:pre;">Kto.-Nr.: 12345681  BLZ: 33355555</div><div class="t" style="top:221.2px;font-size:9.31px;line-height:12px;color:#000;right:30.00px;text-align:right;">79.218,50 €</div><div class="t" style="top:235.9px;font-size:8.4px;line-height:12px;color:#949494;right:28.60px;text-align:right;">Stand: 06.07.</div><svg style="position:absolute;left:706.7px;top:252.60000000000002px" width="6" height="8" viewBox="0 0 6 8"><path d="M1 0.500L5 4L1 7.500Z" fill="#111"/></svg><svg style="position:absolute;left:735.3px;top:251.10000000000002px" width="11.2" height="11.2" viewBox="0 0 12 12"><rect x="0.500" y="0.500" width="7" height="7" fill="#f1f1f1" stroke="#cfcfcf"/><rect x="4.500" y="4.300" width="7" height="7.200" fill="#e6e6e6" stroke="#c2c2c2"/><path d="M5.600 2.300a1.700 1.700 0 1 0 0 2.600M2 3.200h2.500M2 4.200h2.500" stroke="#9a9a9a" stroke-width=".9" fill="none"/><path d="M9.800 6.500a1.700 1.700 0 1 0 0 2.800M6.300 7.500h2.500M6.300 8.500h2.500" stroke="#8a8a8a" stroke-width=".9" fill="none"/></svg><div class="t" style="top:251.0px;font-size:9.16px;line-height:12px;color:#111;left:749.8px;">Tagesgeldkonto</div><div class="t" style="top:266.0px;font-size:8.5px;line-height:12px;color:#949494;left:750.5px;white-space:pre;">Kto.-Nr.: 1112223335  BLZ: 37010050</div><div class="t" style="top:250.9px;font-size:9.2px;line-height:12px;color:#000;right:30.00px;text-align:right;">200,00 €</div><div class="t" style="top:265.6px;font-size:8.4px;line-height:12px;color:#949494;right:28.60px;text-align:right;">Stand: 14.07.</div>
<div style="position:absolute;left:700px;top:311px;width:560px;height:273px;border:2px solid rgba(163,163,163,.6);border-radius:5px;background:#fff;background-clip:padding-box;box-sizing:border-box;overflow:hidden"><div style="position:absolute;left:0px;top:0px;width:556px;height:21px;background:linear-gradient(#e4e4e4,#f1f1f1 35%,#fcfcfc 70%,#fff);border-bottom:1px solid #a6a6a6"></div></div><svg style="position:absolute;left:705px;top:319px" width="3" height="10" viewBox="0 0 3 10"><rect x="0.5" y="0" width="2" height="2" fill="#b5b5b5"/><rect x="0.5" y="4" width="2" height="2" fill="#b5b5b5"/><rect x="0.5" y="8" width="2" height="2" fill="#b5b5b5"/></svg><div class="t" style="top:317.0px;font-size:8.73px;line-height:12px;color:#111;font-weight:700;left:713.4px;">Einnahmen und Ausgaben im Monatsvergleich</div><svg style="position:absolute;left:1242.3px;top:317.3px" width="12" height="12" viewBox="0 0 12 12"><path d="M1.700 1.700l8.600 8.600M10.300 1.700l-8.600 8.600" stroke="#949494" stroke-width="2.300" fill="none"/></svg><svg style="position:absolute;left:1220.8px;top:317.0px" width="12" height="12" viewBox="0 0 12 12"><path d="M6.500 0.300V5.500H11.700Z" fill="#949494"/><path d="M8.400 3.600L11.300 0.700" stroke="#949494" stroke-width="2.500"/><path d="M0.300 6.500H5.500V11.700Z" fill="#949494"/><path d="M3.600 8.400L0.700 11.300" stroke="#949494" stroke-width="2.500"/></svg>
<svg style="position:absolute;left:756px;top:347px" width="490.5" height="194.8" viewBox="0 0 490.5 194.8"><rect x="0" y="0" width="490.5" height="188.8" fill="#fff"/><rect x="0" y="0" width="490.5" height="30.400" fill="#f7f7f7"/><rect x="0" y="82.900" width="490.5" height="52.500" fill="#f7f7f7"/><path d="M0 30.4h490.5" stroke="#d4d4d4" stroke-width="1"/><path d="M0 82.9h490.5" stroke="#d4d4d4" stroke-width="1"/><path d="M0 135.4h490.5" stroke="#d4d4d4" stroke-width="1"/><path d="M0 0.500h490.5M490.2 0v188.8" stroke="#e4e4e4"/><path d="M0.700 0v188.8" stroke="#a2a2a8"/><path d="M-3.500 188.3h494.0" stroke="#96969c" stroke-width="1.200"/><defs><linearGradient id="gg" x1="0" y1="0" x2="0" y2="1"><stop offset="0" stop-color="#b0dc22"/><stop offset=".45" stop-color="#94bd1e"/><stop offset="1" stop-color="#608a18"/></linearGradient><linearGradient id="gr" x1="0" y1="0" x2="0" y2="1"><stop offset="0" stop-color="#f6595f"/><stop offset=".45" stop-color="#de4a51"/><stop offset="1" stop-color="#a2323a"/></linearGradient><linearGradient id="gs" x1="0" y1="0" x2="1" y2="0"><stop offset="0" stop-color="#000" stop-opacity=".10"/><stop offset=".25" stop-color="#fff" stop-opacity=".10"/><stop offset=".6" stop-color="#000" stop-opacity="0"/><stop offset="1" stop-color="#000" stop-opacity=".16"/></linearGradient></defs><rect x="10.90" y="125.60" width="16.2" height="62.60" fill="url(#gg)" stroke="#63851a" stroke-width="1"/><rect x="11.40" y="126.10" width="15.2" height="62.10" fill="url(#gs)"/><path d="M11.70 126.60h14.6" stroke="#c6e65a" stroke-width="1" opacity=".7"/><rect x="29.50" y="146.70" width="15.4" height="41.50" fill="url(#gr)" stroke="#8f3038" stroke-width="1"/><rect x="30.00" y="147.20" width="14.4" height="41.00" fill="url(#gs)"/><path d="M30.30 147.70h13.8" stroke="#fb8a8e" stroke-width="1" opacity=".7"/><path d="M28.5 188.3v5" stroke="#96969c"/><rect x="65.27" y="125.60" width="16.2" height="62.60" fill="url(#gg)" stroke="#63851a" stroke-width="1"/><rect x="65.77" y="126.10" width="15.2" height="62.10" fill="url(#gs)"/><path d="M66.07 126.60h14.6" stroke="#c6e65a" stroke-width="1" opacity=".7"/><rect x="83.87" y="145.50" width="15.4" height="42.70" fill="url(#gr)" stroke="#8f3038" stroke-width="1"/><rect x="84.37" y="146.00" width="14.4" height="42.20" fill="url(#gs)"/><path d="M84.67 146.50h13.8" stroke="#fb8a8e" stroke-width="1" opacity=".7"/><path d="M82.9 188.3v5" stroke="#96969c"/><rect x="119.64" y="71.90" width="16.2" height="116.30" fill="url(#gg)" stroke="#63851a" stroke-width="1"/><rect x="120.14" y="72.40" width="15.2" height="115.80" fill="url(#gs)"/><path d="M120.44 72.90h14.6" stroke="#c6e65a" stroke-width="1" opacity=".7"/><rect x="138.24" y="145.70" width="15.4" height="42.50" fill="url(#gr)" stroke="#8f3038" stroke-width="1"/><rect x="138.74" y="146.20" width="14.4" height="42.00" fill="url(#gs)"/><path d="M139.04 146.70h13.8" stroke="#fb8a8e" stroke-width="1" opacity=".7"/><path d="M137.2 188.3v5" stroke="#96969c"/><rect x="174.01" y="115.50" width="16.2" height="72.70" fill="url(#gg)" stroke="#63851a" stroke-width="1"/><rect x="174.51" y="116.00" width="15.2" height="72.20" fill="url(#gs)"/><path d="M174.81 116.50h14.6" stroke="#c6e65a" stroke-width="1" opacity=".7"/><rect x="192.61" y="145.30" width="15.4" height="42.90" fill="url(#gr)" stroke="#8f3038" stroke-width="1"/><rect x="193.11" y="145.80" width="14.4" height="42.40" fill="url(#gs)"/><path d="M193.41 146.30h13.8" stroke="#fb8a8e" stroke-width="1" opacity=".7"/><path d="M191.6 188.3v5" stroke="#96969c"/><rect x="228.38" y="115.50" width="16.2" height="72.70" fill="url(#gg)" stroke="#63851a" stroke-width="1"/><rect x="228.88" y="116.00" width="15.2" height="72.20" fill="url(#gs)"/><path d="M229.18 116.50h14.6" stroke="#c6e65a" stroke-width="1" opacity=".7"/><rect x="246.98" y="113.30" width="15.4" height="74.90" fill="url(#gr)" stroke="#8f3038" stroke-width="1"/><rect x="247.48" y="113.80" width="14.4" height="74.40" fill="url(#gs)"/><path d="M247.78 114.30h13.8" stroke="#fb8a8e" stroke-width="1" opacity=".7"/><path d="M246.0 188.3v5" stroke="#96969c"/><rect x="282.75" y="124.50" width="16.2" height="63.70" fill="url(#gg)" stroke="#63851a" stroke-width="1"/><rect x="283.25" y="125.00" width="15.2" height="63.20" fill="url(#gs)"/><path d="M283.55 125.50h14.6" stroke="#c6e65a" stroke-width="1" opacity=".7"/><rect x="301.35" y="142.10" width="15.4" height="46.10" fill="url(#gr)" stroke="#8f3038" stroke-width="1"/><rect x="301.85" y="142.60" width="14.4" height="45.60" fill="url(#gs)"/><path d="M302.15 143.10h13.8" stroke="#fb8a8e" stroke-width="1" opacity=".7"/><path d="M300.4 188.3v5" stroke="#96969c"/><rect x="337.12" y="123.50" width="16.2" height="64.70" fill="url(#gg)" stroke="#63851a" stroke-width="1"/><rect x="337.62" y="124.00" width="15.2" height="64.20" fill="url(#gs)"/><path d="M337.92 124.50h14.6" stroke="#c6e65a" stroke-width="1" opacity=".7"/><rect x="355.72" y="145.50" width="15.4" height="42.70" fill="url(#gr)" stroke="#8f3038" stroke-width="1"/><rect x="356.22" y="146.00" width="14.4" height="42.20" fill="url(#gs)"/><path d="M356.52 146.50h13.8" stroke="#fb8a8e" stroke-width="1" opacity=".7"/><path d="M354.7 188.3v5" stroke="#96969c"/><rect x="391.49" y="175.50" width="16.2" height="12.70" fill="url(#gg)" stroke="#63851a" stroke-width="1"/><rect x="391.99" y="176.00" width="15.2" height="12.20" fill="url(#gs)"/><path d="M392.29 176.50h14.6" stroke="#c6e65a" stroke-width="1" opacity=".7"/><rect x="410.09" y="119.90" width="15.4" height="68.30" fill="url(#gr)" stroke="#8f3038" stroke-width="1"/><rect x="410.59" y="120.40" width="14.4" height="67.80" fill="url(#gs)"/><path d="M410.89 120.90h13.8" stroke="#fb8a8e" stroke-width="1" opacity=".7"/><path d="M409.1 188.3v5" stroke="#96969c"/><rect x="445.86" y="16.60" width="16.2" height="171.60" fill="url(#gg)" stroke="#63851a" stroke-width="1"/><rect x="446.36" y="17.10" width="15.2" height="171.10" fill="url(#gs)"/><path d="M446.66 17.60h14.6" stroke="#c6e65a" stroke-width="1" opacity=".7"/><rect x="464.46" y="61.60" width="15.4" height="126.60" fill="url(#gr)" stroke="#8f3038" stroke-width="1"/><rect x="464.96" y="62.10" width="14.4" height="126.10" fill="url(#gs)"/><path d="M465.26 62.60h13.8" stroke="#fb8a8e" stroke-width="1" opacity=".7"/><path d="M463.5 188.3v5" stroke="#96969c"/><path d="M-1.500 177.8h2" stroke="#b0b0b0"/><path d="M-1.500 167.3h2" stroke="#b0b0b0"/><path d="M-1.500 156.8h2" stroke="#b0b0b0"/><path d="M-1.500 146.3h2" stroke="#b0b0b0"/><path d="M-1.500 135.8h2" stroke="#b0b0b0"/><path d="M-1.500 125.3h2" stroke="#b0b0b0"/><path d="M-1.500 114.8h2" stroke="#b0b0b0"/><path d="M-1.500 104.3h2" stroke="#b0b0b0"/><path d="M-1.500 93.8h2" stroke="#b0b0b0"/><path d="M-1.500 83.3h2" stroke="#b0b0b0"/><path d="M-1.500 72.8h2" stroke="#b0b0b0"/><path d="M-1.500 62.3h2" stroke="#b0b0b0"/><path d="M-1.500 51.8h2" stroke="#b0b0b0"/><path d="M-1.500 41.3h2" stroke="#b0b0b0"/><path d="M-1.500 30.8h2" stroke="#b0b0b0"/><path d="M-1.500 20.3h2" stroke="#b0b0b0"/><path d="M-1.500 9.8h2" stroke="#b0b0b0"/><path d="M-3.500 30.4h4" stroke="#a6a6a6"/><path d="M-3.500 82.9h4" stroke="#a6a6a6"/><path d="M-3.500 135.4h4" stroke="#a6a6a6"/></svg>
<div class="t" style="top:371.2px;font-size:8.34px;line-height:12px;color:#222;right:532.00px;text-align:right;">6000 €</div>
<div class="t" style="top:423.7px;font-size:8.34px;line-height:12px;color:#222;right:532.00px;text-align:right;">4000 €</div>
<div class="t" style="top:476.2px;font-size:8.34px;line-height:12px;color:#222;right:532.00px;text-align:right;">2000 €</div>
<div class="t" style="top:528.5px;font-size:8.27px;line-height:12px;color:#222;right:532.00px;text-align:right;">0 €</div>
<div class="t" style="top:554.0px;font-size:9.11px;line-height:12px;color:#222;left:635.80px;width:300px;text-align:center;">November</div>
<div class="t" style="top:541.0px;font-size:8.78px;line-height:12px;color:#222;left:687.30px;width:300px;text-align:center;">Dezember</div>
<div class="t" style="top:554.0px;font-size:8.47px;line-height:12px;color:#222;left:743.60px;width:300px;text-align:center;">Januar</div>
<div class="t" style="top:541.0px;font-size:8.62px;line-height:12px;color:#222;left:796.50px;width:300px;text-align:center;">Februar</div>
<div class="t" style="top:554.0px;font-size:9.0px;line-height:12px;color:#222;left:853.30px;width:300px;text-align:center;">März</div>
<div class="t" style="top:541.0px;font-size:9.33px;line-height:12px;color:#222;letter-spacing:0.008px;left:905.00px;width:300px;text-align:center;">April</div>
<div class="t" style="top:554.0px;font-size:9.06px;line-height:12px;color:#222;left:960.00px;width:300px;text-align:center;">Mai</div>
<div class="t" style="top:541.0px;font-size:8.83px;line-height:12px;color:#222;left:1013.70px;width:300px;text-align:center;">Juni</div>
<div class="t" style="top:554.0px;font-size:8.66px;line-height:12px;color:#222;left:1069.60px;width:300px;text-align:center;">Juli</div>
<div style="position:absolute;left:700px;top:590px;width:560px;height:190px;border:2px solid rgba(163,163,163,.6);border-radius:5px;background:#fff;background-clip:padding-box;box-sizing:border-box;overflow:hidden"><div style="position:absolute;left:0px;top:0px;width:556px;height:21.5px;background:linear-gradient(#e4e4e4,#f1f1f1 35%,#fcfcfc 70%,#fff);border-bottom:1px solid #a6a6a6"></div></div><svg style="position:absolute;left:705px;top:598px" width="3" height="10" viewBox="0 0 3 10"><rect x="0.5" y="0" width="2" height="2" fill="#b5b5b5"/><rect x="0.5" y="4" width="2" height="2" fill="#b5b5b5"/><rect x="0.5" y="8" width="2" height="2" fill="#b5b5b5"/></svg><div class="t" style="top:596.5px;font-size:8.72px;line-height:12px;color:#111;font-weight:700;left:713.4px;">Buchungen nach Lebensbereich und Monat</div><svg style="position:absolute;left:1242.3px;top:596.8px" width="12" height="12" viewBox="0 0 12 12"><path d="M1.700 1.700l8.600 8.600M10.300 1.700l-8.600 8.600" stroke="#949494" stroke-width="2.300" fill="none"/></svg><svg style="position:absolute;left:1220.8px;top:596.5px" width="12" height="12" viewBox="0 0 12 12"><path d="M6.500 0.300V5.500H11.700Z" fill="#949494"/><path d="M8.400 3.600L11.300 0.700" stroke="#949494" stroke-width="2.500"/><path d="M0.300 6.500H5.500V11.700Z" fill="#949494"/><path d="M3.600 8.400L0.700 11.300" stroke="#949494" stroke-width="2.500"/></svg>
<div style="position:absolute;left:702px;top:614.5px;width:556px;height:27.5px;background:linear-gradient(#ababab,#a3a3a3 48%,#8d8d8d 52%,#8a8a8a)"></div>
<div style="position:absolute;left:987px;top:614.5px;width:1px;height:27.5px;background:#d6d6d6"></div>
<div class="t" style="top:616.5px;font-size:8.91px;line-height:12px;color:#f1f1f1;left:704.6px;">Kategorie (Hierarchie)</div>
<div class="t" style="top:627.5px;font-size:9.22px;line-height:12px;color:#f1f1f1;left:709.6px;">Monat (Wertstellung)</div>
<div class="t" style="top:622.0px;font-size:8.83px;line-height:12px;color:#f1f1f1;left:992.1px;">Betrag [€]</div>
<div style="position:absolute;left:0;top:0;width:1280px;height:748px;overflow:hidden"><svg width="0" height="0" style="position:absolute"><defs><linearGradient id="pb" x1="0" y1="0" x2="0" y2="1"><stop offset="0" stop-color="#ffffff"/><stop offset="1" stop-color="#d6d6d6"/></linearGradient></defs></svg><div style="position:absolute;left:702px;top:642.3px;width:556px;height:19.85px;background:#f4f6fc"></div><div style="position:absolute;left:702px;top:661.65px;width:556px;height:1px;background:#dcdee6"></div><svg style="position:absolute;left:705.3px;top:647.9px" width="9" height="9" viewBox="0 0 9 9"><rect x="0.500" y="0.500" width="8" height="8" rx="1.300" fill="url(#pb)" stroke="#8a8a8a"/><path d="M2.500 4.500h4M4.500 2.500v4" stroke="#3a3a3a" stroke-width="1"/></svg><div class="t" style="top:646.4px;font-size:9.0px;line-height:12px;color:#111;left:720.2px;">Bar- und Kreditkartenzahlungen</div><div class="t" style="top:646.4px;font-size:8.33px;line-height:12px;color:#ad3a46;right:27.80px;text-align:right;">-1.776,90</div><div style="position:absolute;left:702px;top:662.15px;width:556px;height:19.85px;background:#fff"></div><div style="position:absolute;left:702px;top:681.5px;width:556px;height:1px;background:#dcdee6"></div><svg style="position:absolute;left:705.3px;top:667.8px" width="9" height="9" viewBox="0 0 9 9"><rect x="0.500" y="0.500" width="8" height="8" rx="1.300" fill="url(#pb)" stroke="#8a8a8a"/><path d="M2.500 4.500h4M4.500 2.500v4" stroke="#3a3a3a" stroke-width="1"/></svg><div class="t" style="top:666.2px;font-size:9.04px;line-height:12px;color:#111;left:720.2px;">Einkünfte</div><div class="t" style="top:666.2px;font-size:8.27px;line-height:12px;color:#111;right:27.80px;text-align:right;">43.402,95</div><div style="position:absolute;left:702px;top:682.0px;width:556px;height:19.85px;background:#f4f6fc"></div><div style="position:absolute;left:702px;top:701.35px;width:556px;height:1px;background:#dcdee6"></div><svg style="position:absolute;left:705.3px;top:687.6px" width="9" height="9" viewBox="0 0 9 9"><rect x="0.500" y="0.500" width="8" height="8" rx="1.300" fill="url(#pb)" stroke="#8a8a8a"/><path d="M2.500 4.500h4M4.500 2.500v4" stroke="#3a3a3a" stroke-width="1"/></svg><div class="t" style="top:686.1px;font-size:8.46px;line-height:12px;color:#111;letter-spacing:-0.004px;left:720.2px;">Freizeit</div><div class="t" style="top:686.1px;font-size:8.33px;line-height:12px;color:#ad3a46;right:27.80px;text-align:right;">-1.076,75</div><div style="position:absolute;left:702px;top:701.8499999999999px;width:556px;height:19.85px;background:#fff"></div><div style="position:absolute;left:702px;top:721.1999999999999px;width:556px;height:1px;background:#dcdee6"></div><svg style="position:absolute;left:705.3px;top:707.4px" width="9" height="9" viewBox="0 0 9 9"><rect x="0.500" y="0.500" width="8" height="8" rx="1.300" fill="url(#pb)" stroke="#8a8a8a"/><path d="M2.500 4.500h4M4.500 2.500v4" stroke="#3a3a3a" stroke-width="1"/></svg><div class="t" style="top:705.9px;font-size:9.04px;line-height:12px;color:#111;left:720.2px;">Haushalt &amp; Lebenshalt.</div><div class="t" style="top:705.9px;font-size:8.33px;line-height:12px;color:#ad3a46;right:27.80px;text-align:right;">-5.993,09</div><div style="position:absolute;left:702px;top:721.6999999999999px;width:556px;height:19.85px;background:#f4f6fc"></div><div style="position:absolute;left:702px;top:741.05px;width:556px;height:1px;background:#dcdee6"></div><svg style="position:absolute;left:705.3px;top:727.3px" width="9" height="9" viewBox="0 0 9 9"><rect x="0.500" y="0.500" width="8" height="8" rx="1.300" fill="url(#pb)" stroke="#8a8a8a"/><path d="M2.500 4.500h4M4.500 2.500v4" stroke="#3a3a3a" stroke-width="1"/></svg><div class="t" style="top:725.8px;font-size:8.52px;line-height:12px;color:#111;left:720.2px;">Keine</div><div class="t" style="top:725.8px;font-size:8.33px;line-height:12px;color:#ad3a46;right:27.80px;text-align:right;">-3.512,14</div><div style="position:absolute;left:702px;top:741.55px;width:556px;height:19.85px;background:#fff"></div><div style="position:absolute;left:702px;top:760.9px;width:556px;height:1px;background:#dcdee6"></div><svg style="position:absolute;left:705.3px;top:747.1px" width="9" height="9" viewBox="0 0 9 9"><rect x="0.500" y="0.500" width="8" height="8" rx="1.300" fill="url(#pb)" stroke="#8a8a8a"/><path d="M2.500 4.500h4M4.500 2.500v4" stroke="#3a3a3a" stroke-width="1"/></svg><div style="position:absolute;left:716px;top:642px;width:1px;height:120px;background:#e1e3ea"></div><div style="position:absolute;left:987px;top:642px;width:2px;height:120px;background:#d6d9e1"></div></div>
<div style="position:absolute;left:0px;top:748px;width:1280px;height:22px;background:linear-gradient(#6a9fd9 0,#4a83c3 1.5px,#3f76b6 50%,#376cab)"></div>
<div style="position:absolute;left:128px;top:751px;width:1061px;height:17px;background:#2f5d93;border-radius:3px;box-shadow:inset 0 1px 0 #264d7d"></div>
<div style="position:absolute;left:1135px;top:752px;width:54px;height:15.5px;background:linear-gradient(#5f86b6,#466b9e);border-radius:0 2px 2px 0"></div>
<div class="t" style="top:753.3px;font-size:9.22px;line-height:12px;color:#fff;left:1143.2px;">Verlauf</div>
<svg style="position:absolute;left:1178px;top:757px" width="7" height="5" viewBox="0 0 7 5"><path d="M0.2 0.300h6.600L3.500 4.700z" fill="#fff"/></svg>
<svg style="position:absolute;left:1196.5px;top:754px" width="11" height="10" viewBox="0 0 11 10"><path d="M1 5.500l3 3.200L10 1.200" stroke="#5dbb4a" stroke-width="2" fill="none"/></svg>
<div class="t" style="top:753.3px;font-size:8.84px;line-height:12px;color:#e8eff8;letter-spacing:-0.514px;left:1210.2px;">13</div>
<svg style="position:absolute;left:1223px;top:752.5px" width="13" height="12" viewBox="0 0 13 12"><path d="M6.500 0.600L12.600 11.300H0.400z" fill="#f8cc4f" stroke="#dfa92a" stroke-width=".6"/><path d="M6.500 4v4" stroke="#7a5a10" stroke-width="1.400"/><circle cx="6.500" cy="9.600" r=".8" fill="#7a5a10"/></svg>
<div class="t" style="top:753.3px;font-size:9.4px;line-height:12px;color:#e8eff8;left:1238px;">1</div>
<div style="position:absolute;left:1248px;top:755.5px;width:11.5px;height:7.5px;background:#eef2f7;border-radius:1px"></div>
<div class="t" style="top:753.3px;font-size:9.17px;line-height:12px;color:#e8eff8;left:1261.6px;">15</div>
</div></body></html>
